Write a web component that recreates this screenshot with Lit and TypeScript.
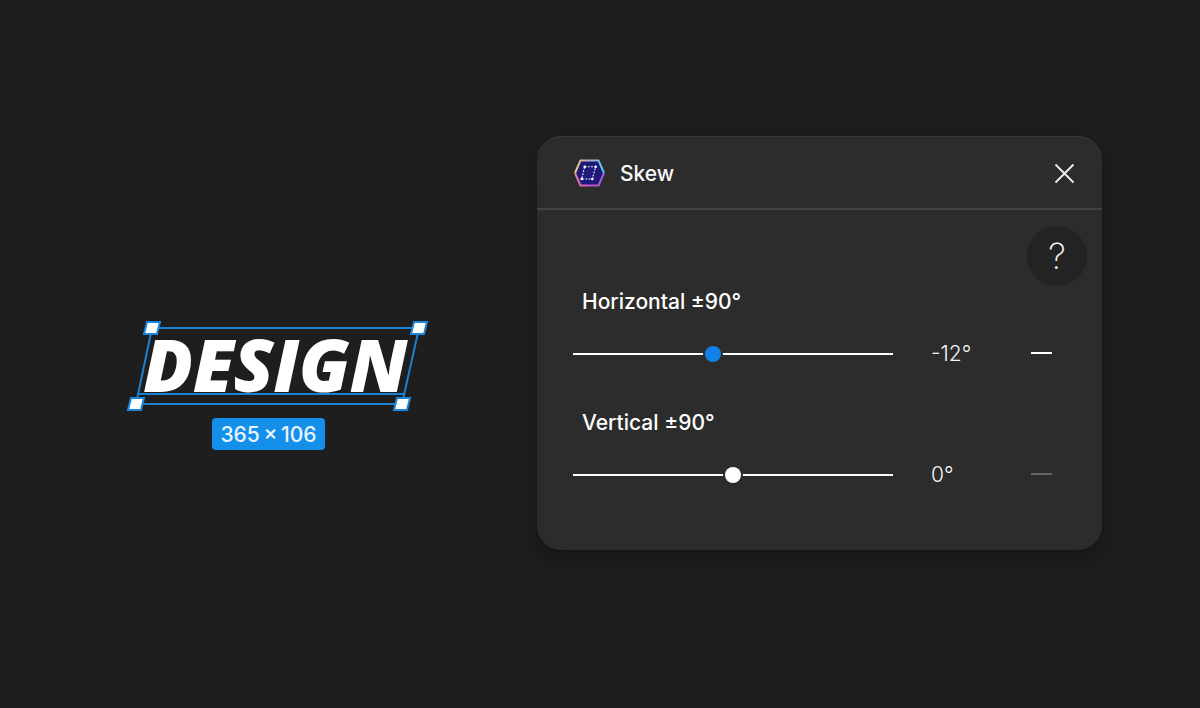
import { LitElement, html, css, svg } from "lit";
import { customElement } from "lit/decorators.js";

const handle = (x: number, y: number) =>
  svg`<polygon class="h" points="${x - 5},${y - 6} ${x + 8},${y - 6} ${x + 5},${y + 6} ${x - 8},${y + 6}"/>`;

@customElement("app-root")
export class AppRoot extends LitElement {
  static styles = css`
    :host { display: block; width: 1200px; height: 708px; overflow: hidden; background: #1e1e1e; font-family: Inter, "Liberation Sans", sans-serif; color: #fff; }
    .page { display: flex; align-items: flex-start; height: 708px; box-sizing: border-box; padding: 136px 98px 0 120px; }
    .art { position: relative; width: 417px; height: 414px; flex: none; }
    .sel { position: absolute; left: 0; top: 170px; width: 320px; height: 120px; overflow: visible; }
    .sel .l { fill: none; stroke: #1c80d0; stroke-width: 2; }
    .sel .h { fill: #fff; stroke: #1a86dc; stroke-width: 2; }
    .word { position: absolute; left: 23px; top: 180px; font: italic 800 72px/96px "Open Sans", sans-serif; letter-spacing: -0.5px; color: #fff; white-space: nowrap; transform: scaleX(1.02); transform-origin: left center; }
    .dim { position: absolute; left: 92px; top: 282px; width: 113px; height: 32px; border-radius: 4px; background: #1590ea; color: #e8f5ff; font-size: 21px; font-weight: 500; line-height: 33px; text-align: center; white-space: nowrap; word-spacing: -2px; }
    .panel { position: relative; width: 565px; height: 414px; flex: none; box-sizing: border-box; background: #2c2c2c; border-radius: 24px; border-top: 1px solid #3a3a3a; box-shadow: 0 8px 24px rgba(0,0,0,.35); }
    .head { display: flex; align-items: center; height: 70px; padding: 1px 27px 0 37px; border-bottom: 2px solid #434343; }
    .head .logo { width: 31px; height: 30px; flex: none; }
    .head .title { margin-left: 15px; font-size: 21px; font-weight: 500; color: #f8f8f8; flex: 1; }
    .head .x { width: 21px; height: 21px; flex: none; }
    .help { position: absolute; left: 490px; top: 89px; width: 60px; height: 60px; border-radius: 50%; background: #232323; display: flex; align-items: center; justify-content: center; font-size: 36px; font-weight: 200; color: #f4f4f4; line-height: 1; }
    .body { display: flex; flex-direction: column; padding: 80px 50px 0 36px; }
    .group { display: flex; flex-direction: column; height: 121px; }
    .label { font-size: 21px; font-weight: 500; line-height: 24px; margin-left: 9px; color: #fff; white-space: nowrap; }
    .row { display: grid; grid-template-columns: 320px 62px 21px; column-gap: 38px; align-items: center; height: 24px; margin-top: 27px; }
    .track { position: relative; height: 2px; background: #fff; }
    .thumb { position: absolute; top: -7px; width: 16px; height: 16px; margin-left: -8px; border-radius: 50%; box-shadow: 0 0 0 2px #2c2c2c; }
    .thumb.blue { background: #1181e6; }
    .thumb.white { background: #fff; }
    .val { font-size: 21px; font-weight: 300; color: #f6f6f6; white-space: nowrap; }
    .dash { height: 2px; background: #fff; margin-top: -2px; }
    .dash.off { background: #636363; }
  `;

  render() {
    return html`<div class="page">
      <div class="art">
        <div class="word">DESIGN</div>
        <svg class="sel" viewBox="0 0 320 120">
          <path class="l" d="M32 22 H299 L282 98 H16 Z M19 88 H285"/>
          ${handle(32, 22)}${handle(299, 22)}${handle(16, 98)}${handle(282, 98)}
        </svg>
        <div class="dim">365 × 106</div>
      </div>
      <div class="panel">
        <div class="head">
          <svg class="logo" viewBox="0 0 31 30">
            <defs>
              <linearGradient id="gt" x1="0" y1="0" x2="1" y2="0">
                <stop offset="0" stop-color="#f0c870"/><stop offset=".5" stop-color="#b8a8c8"/><stop offset="1" stop-color="#58c8f0"/>
              </linearGradient>
              <linearGradient id="gb" x1="0" y1="0" x2="1" y2="0">
                <stop offset="0" stop-color="#e080b0"/><stop offset=".5" stop-color="#d050c0"/><stop offset="1" stop-color="#9a60e0"/>
              </linearGradient>
            </defs>
            <polygon points="6.5,2.4 24.5,2.4 30,15 24.5,27.6 6.5,27.6 1,15" fill="#1f1a7a" stroke-linejoin="round"/>
            <path d="M1 15 L6.5 2.4 H24.5 L30 15" fill="none" stroke="url(#gt)" stroke-width="2" stroke-linejoin="round"/>
            <path d="M1 15 L6.5 27.6 H24.5 L30 15" fill="none" stroke="url(#gb)" stroke-width="2" stroke-linejoin="round"/>
            <path d="M10.7 8.7 H21.7 L18.3 21 H7.7 Z" fill="none" stroke="#fff" stroke-width="1.1" stroke-dasharray="1.8 1.4"/>
            <g fill="#fff"><circle cx="10.7" cy="8.7" r="1.3"/><circle cx="21.7" cy="8.7" r="1.3"/><circle cx="7.7" cy="21" r="1.3"/><circle cx="18.3" cy="21" r="1.3"/></g>
          </svg>
          <span class="title">Skew</span>
          <svg class="x" viewBox="0 0 21 21"><path d="M1.5 1.5 L19.5 19.5 M19.5 1.5 L1.5 19.5" stroke="#f2f2f2" stroke-width="1.8" fill="none"/></svg>
        </div>
        <div class="help">?</div>
        <div class="body">
          <div class="group">
            <div class="label">Horizontal ±90°</div>
            <div class="row">
              <div class="track"><div class="thumb blue" style="left:140px"></div></div>
              <div class="val">-12°</div>
              <div class="dash"></div>
            </div>
          </div>
          <div class="group">
            <div class="label">Vertical ±90°</div>
            <div class="row">
              <div class="track"><div class="thumb white" style="left:160px"></div></div>
              <div class="val">0°</div>
              <div class="dash off"></div>
            </div>
          </div>
        </div>
      </div>
    </div>`;
  }
}
